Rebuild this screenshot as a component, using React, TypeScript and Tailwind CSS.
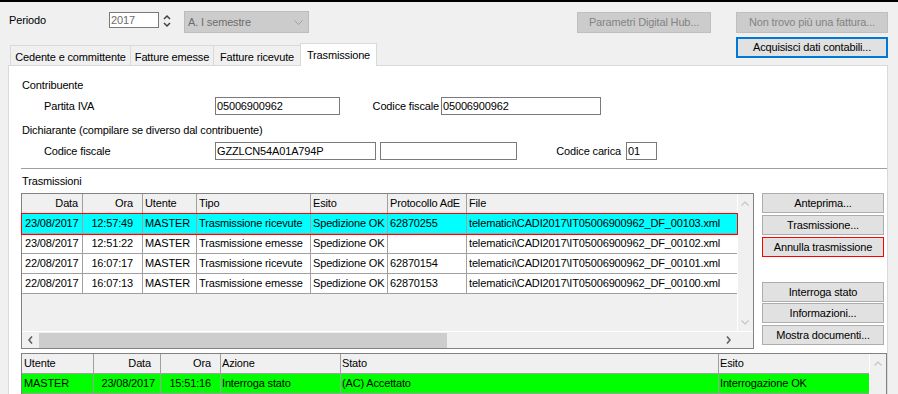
import React from 'react';

type Col = { label: string; w: string; h: string; c: string };

const cols1: Col[] = [
  { label: 'Data', w: 'w-[61px]', h: 'text-right pr-[4px]', c: 'pl-[3px]' },
  { label: 'Ora', w: 'w-[60px]', h: 'text-right pr-[9px]', c: 'text-right pr-[9px]' },
  { label: 'Utente', w: 'w-[54px]', h: 'pl-[2px]', c: 'pl-[2px]' },
  { label: 'Tipo', w: 'w-[114px]', h: 'pl-[2px]', c: 'pl-[2px]' },
  { label: 'Esito', w: 'w-[77px]', h: 'pl-[2px]', c: 'pl-[2px]' },
  { label: 'Protocollo AdE', w: 'w-[79px]', h: 'pl-[2px]', c: 'pl-[2px]' },
  { label: 'File', w: 'w-[270px]', h: 'pl-[2px]', c: 'pl-[2px]' },
];

const rows1 = [
  ['23/08/2017', '12:57:49', 'MASTER', 'Trasmissione ricevute', 'Spedizione OK', '62870255', 'telematici\\CADI2017\\IT05006900962_DF_00103.xml'],
  ['23/08/2017', '12:51:22', 'MASTER', 'Trasmissione emesse', 'Spedizione OK', '', 'telematici\\CADI2017\\IT05006900962_DF_00102.xml'],
  ['22/08/2017', '16:07:17', 'MASTER', 'Trasmissione ricevute', 'Spedizione OK', '62870154', 'telematici\\CADI2017\\IT05006900962_DF_00101.xml'],
  ['22/08/2017', '16:07:13', 'MASTER', 'Trasmissione emesse', 'Spedizione OK', '62870153', 'telematici\\CADI2017\\IT05006900962_DF_00100.xml'],
];

const cols2: Col[] = [
  { label: 'Utente', w: 'w-[72px]', h: 'pl-[2px]', c: 'pl-[2px]' },
  { label: 'Data', w: 'w-[67px]', h: 'text-right pr-[9px]', c: 'text-right pr-[5px]' },
  { label: 'Ora', w: 'w-[60px]', h: 'text-right pr-[9px]', c: 'text-right pr-[9px]' },
  { label: 'Azione', w: 'w-[120px]', h: 'pl-[1px]', c: 'pl-[1px]' },
  { label: 'Stato', w: 'w-[378px]', h: 'pl-[1px]', c: 'pl-[1px]' },
  { label: 'Esito', w: 'w-[150px]', h: 'pl-[1px]', c: 'pl-[1px]' },
];

const rows2 = [['MASTER', '23/08/2017', '15:51:16', 'Interroga stato', '(AC) Accettato', 'Interrogazione OK']];

function Chevron({ dir, color }: { dir: 'up' | 'down'; color: string }) {
  return (
    <svg width="8" height="5" viewBox="0 0 8 5" className="block">
      <polyline
        points={dir === 'up' ? '0.5,4.5 4,1 7.5,4.5' : '0.5,0.5 4,4 7.5,0.5'}
        fill="none"
        stroke={color}
        strokeWidth="1.2"
      />
    </svg>
  );
}

function SideArrow({ dir }: { dir: 'left' | 'right' }) {
  return (
    <svg width="5" height="8" viewBox="0 0 5 8" className="block">
      <polyline
        points={dir === 'left' ? '4,0.5 1,4 4,7.5' : '1,0.5 4,4 1,7.5'}
        fill="none"
        stroke="#606060"
        strokeWidth="1.6"
      />
    </svg>
  );
}

function Cells({ cols, values, header }: { cols: Col[]; values: string[]; header?: boolean }) {
  return (
    <>
      {cols.map((col, i) => (
        <div
          key={col.label}
          className={`${col.w} shrink-0 h-full overflow-hidden whitespace-nowrap ${
            i < cols.length - 1 ? 'border-r border-[#a0a0a0]' : ''
          } ${header ? col.h : col.c}`}
        >
          {values[i]}
        </div>
      ))}
    </>
  );
}

function Button({ children, className = '' }: { children: React.ReactNode; className?: string }) {
  return (
    <div className={`h-[20px] border bg-[#e1e1e1] text-center leading-[18px] whitespace-nowrap ${className}`}>
      {children}
    </div>
  );
}

export default function App() {
  return (
    <div className="w-[898px] h-[394px] overflow-hidden bg-[#f0f0f0] font-['Liberation_Sans',Arial,sans-serif] text-[11px] tracking-[-0.15px] text-black">
      <div className="h-[2px] bg-black" />

      {/* Periodo row */}
      <div className="mt-[9px] flex items-start h-[22px] pr-[10px]">
        <div className="w-[109px] pl-[9px] leading-[18px]">Periodo</div>
        <div className="mt-[1px] h-[16px] w-[50px] border border-[#7a7a7a] bg-white pl-[1px] leading-[14px] text-[#6d6d6d]">
          2017
        </div>
        <svg width="8" height="14" viewBox="0 0 8 14" className="ml-[4px] mt-[3px] block">
          <polyline points="1,5 4,2 7,5" fill="none" stroke="#404040" strokeWidth="1.5" />
          <polyline points="1,9 4,12 7,9" fill="none" stroke="#404040" strokeWidth="1.5" />
        </svg>
        <div className="ml-[13px] h-[22px] w-[125px] border border-[#bcbcbc] bg-[#cccccc] flex items-center justify-between pl-[3px] pr-[5px] text-[#6d6d6d]">
          <span>A. I semestre</span>
          <svg width="9" height="5" viewBox="0 0 9 5" className="block">
            <polyline points="0.5,0.5 4.5,4.5 8.5,0.5" fill="none" stroke="#a0a0a0" strokeWidth="1" />
          </svg>
        </div>
        <div className="flex-1" />
        <div className="mt-[1px] h-[21px] w-[134px] border border-[#bfbfbf] bg-[#cccccc] text-center leading-[19px] text-[#838383]">
          Parametri Digital Hub...
        </div>
        <div className="ml-[25px] mt-[1px] h-[21px] w-[152px] border border-[#bfbfbf] bg-[#cccccc] text-center leading-[19px] text-[#838383]">
          Non trovo più una fattura...
        </div>
      </div>

      {/* Tabs + Acquisisci */}
      <div className="mt-[4px] h-[28px] flex items-end justify-between pl-[10px] pr-[10px]">
        <div className="flex items-end">
          <div className="w-[121px] h-[20px] border border-b-0 border-[#d9d9d9] text-center pt-[3px] leading-[17px]">
            Cedente e committente
          </div>
          <div className="-ml-[1px] w-[84px] h-[20px] border border-b-0 border-[#d9d9d9] text-center pt-[3px] leading-[17px]">
            Fatture emesse
          </div>
          <div className="-ml-[1px] w-[88px] h-[20px] border border-b-0 border-[#d9d9d9] text-center pt-[3px] leading-[17px]">
            Fatture ricevute
          </div>
          <div className="relative z-10 -ml-[1px] -mb-[1px] w-[77px] h-[23px] border border-b-0 border-[#d9d9d9] bg-white text-center pt-[3px] leading-[17px]">
            Trasmissione
          </div>
        </div>
        <div className="self-start h-[21px] w-[152px] border-2 border-[#0078d7] bg-[#e1e1e1] text-center leading-[17px]">
          Acquisisci dati contabili...
        </div>
      </div>

      {/* Panel */}
      <div className="ml-[8px] w-[880px] h-[340px] border border-[#d9d9d9] bg-white pl-[12px]">
        <div className="mt-[13px] pl-[1px] leading-[13px]">Contribuente</div>
        <div className="mt-[5px] flex items-center h-[18px]">
          <div className="w-[194px] pl-[23px] leading-[13px] pt-[1px]">Partita IVA</div>
          <div className="w-[125px] h-[18px] border border-[#7a7a7a] bg-white pl-[1px] leading-[16px]">05006900962</div>
          <div className="w-[101px] text-right pr-[2px] leading-[13px] pt-[1px]">Codice fiscale</div>
          <div className="w-[160px] h-[18px] border border-[#7a7a7a] bg-white pl-[1px] leading-[16px]">05006900962</div>
        </div>
        <div className="mt-[9px] pl-[1px] leading-[13px]">Dichiarante (compilare se diverso dal contribuente)</div>
        <div className="mt-[5px] flex items-center h-[18px]">
          <div className="w-[194px] pl-[23px] leading-[13px] pt-[1px]">Codice fiscale</div>
          <div className="w-[161px] h-[18px] border border-[#7a7a7a] bg-white pl-[1px] leading-[16px]">GZZLCN54A01A794P</div>
          <div className="ml-[4px] w-[137px] h-[18px] border border-[#7a7a7a] bg-white" />
          <div className="w-[109px] text-right pr-[5px] leading-[13px] pt-[1px]">Codice carica</div>
          <div className="w-[31px] h-[18px] border border-[#7a7a7a] bg-white pl-[1px] leading-[16px]">01</div>
        </div>
        <div className="mt-[8px] h-[1px] bg-[#a0a0a0]" />

        <div className="mt-[6px] pl-[1px] leading-[13px]">Trasmissioni</div>
        <div className="mt-[5px] flex items-start">
          {/* Trasmissioni grid */}
          <div className="w-[733px] h-[156px] border border-[#828282] bg-[#f0f0f0] flex flex-col">
            <div className="flex h-[137px]">
              <div className="w-[715px] flex flex-col">
                <div className="flex h-[20px] border-b border-[#a0a0a0] leading-[19px]">
                  <Cells cols={cols1} values={cols1.map((c) => c.label)} header />
                </div>
                {rows1.map((r, i) => (
                  <div
                    key={i}
                    className={`flex h-[20px] border-b border-[#a0a0a0] leading-[19px] ${
                      i === 0 ? 'relative z-10 bg-[#00ffff] outline outline-1 outline-[#ff0000]' : 'bg-white'
                    }`}
                  >
                    <Cells cols={cols1} values={r} />
                  </div>
                ))}
              </div>
              <div className="w-[16px] border-l border-white flex flex-col items-center justify-between pt-[7px] pb-[6px] pr-[1px]">
                <Chevron dir="up" color="#c5c5c5" />
                <Chevron dir="down" color="#c5c5c5" />
              </div>
            </div>
            <div className="h-[17px] border-t border-white flex">
              <div className="w-[715px] flex items-center">
                <div className="w-[17px] flex justify-center">
                  <SideArrow dir="left" />
                </div>
                <div className="w-[408px] h-[15px] bg-[#cdcdcd]" />
                <div className="flex-1" />
                <div className="w-[17px] flex justify-center">
                  <SideArrow dir="right" />
                </div>
              </div>
              <div className="w-[16px]" />
            </div>
          </div>

          {/* Side buttons */}
          <div className="ml-[8px] w-[122px] flex flex-col">
            <Button className="border-[#adadad]">Anteprima...</Button>
            <Button className="mt-[2px] border-[#adadad]">Trasmissione...</Button>
            <Button className="mt-[2px] border-[#ff0000]">Annulla trasmissione</Button>
            <Button className="mt-[25px] border-[#adadad]">Interroga stato</Button>
            <Button className="mt-[1px] border-[#adadad]">Informazioni...</Button>
            <Button className="mt-[2px] border-[#adadad]">Mostra documenti...</Button>
          </div>
        </div>

        {/* Stati grid */}
        <div className="mt-[4px] w-[866px] h-[60px] border border-[#828282] bg-[#f0f0f0] flex">
          <div className="w-[847px] flex flex-col">
            <div className="flex h-[20px] border-b border-[#a0a0a0] leading-[19px]">
              <Cells cols={cols2} values={cols2.map((c) => c.label)} header />
            </div>
            {rows2.map((r, i) => (
              <div key={i} className="flex h-[20px] border-b border-[#a0a0a0] leading-[19px] bg-[#00ff00]">
                <Cells cols={cols2} values={r} />
              </div>
            ))}
          </div>
          <div className="w-[17px] border-l border-white flex flex-col items-center pt-[7px]">
            <Chevron dir="up" color="#c5c5c5" />
          </div>
        </div>
      </div>
    </div>
  );
}
